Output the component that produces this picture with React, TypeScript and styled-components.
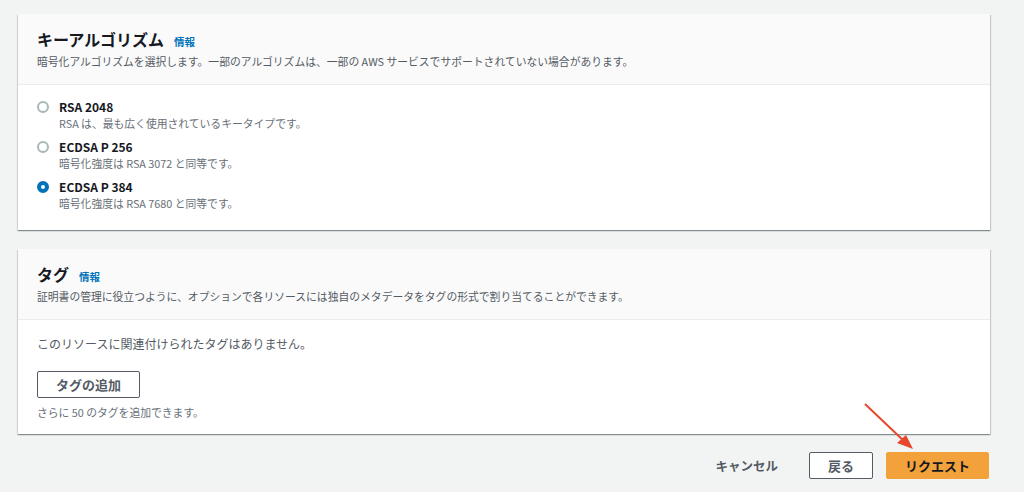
import styled, { createGlobalStyle } from "styled-components";

const GlobalStyle = createGlobalStyle`
  html, body {
    margin: 0;
    padding: 0;
    background: #f2f3f3;
  }
  body {
    font-family: "Noto Sans CJK JP", "Noto Sans", sans-serif;
    color: #16191f;
  }
`;

type Option = {
  label: string;
  description: string;
  checked?: boolean;
};

const options: Option[] = [
  { label: "RSA 2048", description: "RSA は、最も広く使用されているキータイプです。" },
  { label: "ECDSA P 256", description: "暗号化強度は RSA 3072 と同等です。" },
  { label: "ECDSA P 384", description: "暗号化強度は RSA 7680 と同等です。", checked: true },
];

export default function App() {
  return (
    <>
      <GlobalStyle />
      <Page>
        <Card>
          <CardHeader>
            <TitleRow>
              <Title>キーアルゴリズム</Title>
              <InfoLink>情報</InfoLink>
            </TitleRow>
            <Description>
              暗号化アルゴリズムを選択します。一部のアルゴリズムは、一部の AWS サービスでサポートされていない場合があります。
            </Description>
          </CardHeader>
          <RadioBody>
            {options.map((o) => (
              <RadioRow key={o.label}>
                <Radio checked={!!o.checked} />
                <RadioText>
                  <RadioLabel>{o.label}</RadioLabel>
                  <Hint>{o.description}</Hint>
                </RadioText>
              </RadioRow>
            ))}
          </RadioBody>
        </Card>

        <Card>
          <CardHeader>
            <TitleRow>
              <Title>タグ</Title>
              <InfoLink>情報</InfoLink>
            </TitleRow>
            <Description>
              証明書の管理に役立つように、オプションで各リソースには独自のメタデータをタグの形式で割り当てることができます。
            </Description>
          </CardHeader>
          <TagBody>
            <EmptyText>このリソースに関連付けられたタグはありません。</EmptyText>
            <Button>タグの追加</Button>
            <Hint>さらに 50 のタグを追加できます。</Hint>
          </TagBody>
        </Card>

        <Footer>
          <LinkButton>キャンセル</LinkButton>
          <Button>戻る</Button>
          <Button primary>リクエスト</Button>
          <Arrow width="60" height="56" viewBox="0 0 60 56">
            <line x1="4" y1="3" x2="44" y2="41" stroke="#e6472d" strokeWidth="2" />
            <polygon points="52,48 36,42 45,34" fill="#e6472d" />
          </Arrow>
        </Footer>
      </Page>
    </>
  );
}

const Page = styled.div`
  display: flex;
  flex-direction: column;
  gap: 19px;
  padding: 14px 34px 0 18px;
`;

const Card = styled.section`
  background: #fff;
  box-shadow: 0 1px 1px 0 rgba(0, 28, 36, 0.3), 1px 1px 1px 0 rgba(0, 28, 36, 0.15),
    -1px 1px 1px 0 rgba(0, 28, 36, 0.1);
`;

const CardHeader = styled.div`
  background: #fafafa;
  border-bottom: 1px solid #eaeded;
  padding: 14px 19px 15px;
`;

const TitleRow = styled.div`
  display: flex;
  align-items: baseline;
  gap: 10px;
  height: 22px;
`;

const Title = styled.h2`
  margin: 0;
  font-size: 16px;
  line-height: 22px;
  font-weight: 700;
  color: #16191f;
`;

const InfoLink = styled.a`
  font-size: 10.5px;
  font-weight: 700;
  color: #0073bb;
  cursor: pointer;
`;

const Description = styled.p`
  margin: 3px 0 0;
  font-size: 10.8px;
  line-height: 16px;
  color: #545b64;
`;

const RadioBody = styled.div`
  display: flex;
  flex-direction: column;
  gap: 8px;
  padding: 14px 19px 19px;
`;

const RadioRow = styled.label`
  display: flex;
  align-items: flex-start;
  gap: 10px;
`;

const Radio = styled.span<{ checked: boolean }>`
  flex: none;
  box-sizing: border-box;
  width: 12px;
  height: 12px;
  margin-top: 2px;
  border-radius: 50%;
  background: #fff;
  border: ${(p) => (p.checked ? "4px solid #0073bb" : "2px solid #aab7b8")};
`;

const RadioText = styled.div`
  display: flex;
  flex-direction: column;
`;

const RadioLabel = styled.span`
  font-size: 12px;
  line-height: 16px;
  font-weight: 700;
  color: #16191f;
`;

const Hint = styled.span`
  font-size: 10.8px;
  line-height: 16px;
  color: #687078;
`;

const TagBody = styled.div`
  display: flex;
  flex-direction: column;
  align-items: flex-start;
  padding: 15px 19px 14px;

  & > ${Hint} {
    margin-top: 6px;
  }
`;

const EmptyText = styled.p`
  margin: 0 0 18px;
  font-size: 12px;
  line-height: 18px;
  color: #545b64;
`;

const Button = styled.button<{ primary?: boolean }>`
  height: 27px;
  padding: 0 18px;
  border-radius: 2px;
  border: 1px solid ${(p) => (p.primary ? "#f2a13b" : "#545b64")};
  background: ${(p) => (p.primary ? "#f2a13b" : "#fff")};
  color: ${(p) => (p.primary ? "#16191f" : "#545b64")};
  font-family: inherit;
  font-size: 13px;
  font-weight: 700;
  line-height: 1;
  cursor: pointer;
`;

const LinkButton = styled.button`
  height: 27px;
  padding: 0 18px;
  border: none;
  background: none;
  color: #545b64;
  font-family: inherit;
  font-size: 12.5px;
  font-weight: 700;
`;

const Footer = styled.div`
  position: relative;
  display: flex;
  justify-content: flex-end;
  gap: 13px;
  margin-top: -1px;
  padding-right: 1px;
`;

const Arrow = styled.svg`
  position: absolute;
  right: 69px;
  top: -51px;
`;
